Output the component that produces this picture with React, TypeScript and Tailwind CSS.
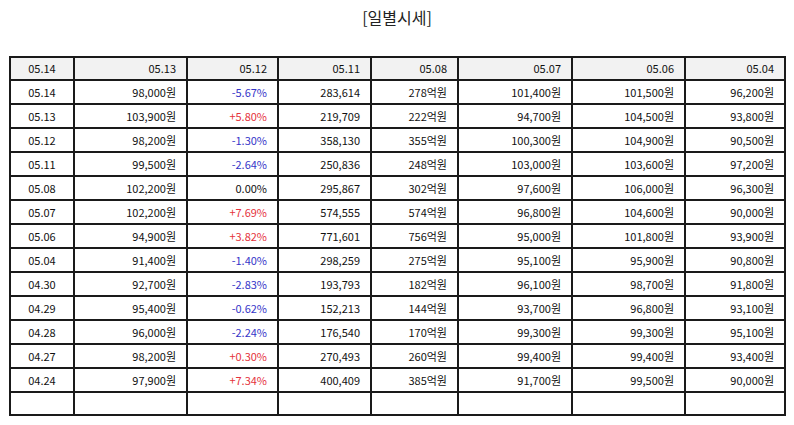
const headers = ['05.14', '05.13', '05.12', '05.11', '05.08', '05.07', '05.06', '05.04'];

const rows: string[][] = [
  ['05.14', '98,000원', '-5.67%', '283,614', '278억원', '101,400원', '101,500원', '96,200원'],
  ['05.13', '103,900원', '+5.80%', '219,709', '222억원', '94,700원', '104,500원', '93,800원'],
  ['05.12', '98,200원', '-1.30%', '358,130', '355억원', '100,300원', '104,900원', '90,500원'],
  ['05.11', '99,500원', '-2.64%', '250,836', '248억원', '103,000원', '103,600원', '97,200원'],
  ['05.08', '102,200원', '0.00%', '295,867', '302억원', '97,600원', '106,000원', '96,300원'],
  ['05.07', '102,200원', '+7.69%', '574,555', '574억원', '96,800원', '104,600원', '90,000원'],
  ['05.06', '94,900원', '+3.82%', '771,601', '756억원', '95,000원', '101,800원', '93,900원'],
  ['05.04', '91,400원', '-1.40%', '298,259', '275억원', '95,100원', '95,900원', '90,800원'],
  ['04.30', '92,700원', '-2.83%', '193,793', '182억원', '96,100원', '98,700원', '91,800원'],
  ['04.29', '95,400원', '-0.62%', '152,213', '144억원', '93,700원', '96,800원', '93,100원'],
  ['04.28', '96,000원', '-2.24%', '176,540', '170억원', '99,300원', '99,300원', '95,100원'],
  ['04.27', '98,200원', '+0.30%', '270,493', '260억원', '99,400원', '99,400원', '93,400원'],
  ['04.24', '97,900원', '+7.34%', '400,409', '385억원', '91,700원', '99,500원', '90,000원'],
];

// column widths incl. right border
const widths = ['w-[64px]', 'w-[113px]', 'w-[91px]', 'w-[93px]', 'w-[87px]', 'w-[114px]', 'w-[113px]', 'w-[100px]'];

function rateColor(v: string) {
  if (v.startsWith('+')) return 'text-[#e5323c]';
  if (v.startsWith('-')) return 'text-[#3535c8]';
  return 'text-[#111]';
}

export default function App() {
  return (
    <div
      className="w-[794px] h-[425px] bg-white text-[#111] overflow-hidden"
      style={{ fontFamily: '"Noto Sans CJK KR", "Noto Sans", sans-serif' }}
    >
      <h1 className="text-center text-[16px] leading-none pt-[9px] text-[#222]">[일별시세]</h1>

      <table className="ml-[9px] mt-[31px] border-separate border-spacing-0 table-fixed text-[11px] leading-none border-t-2 border-l-2 border-[#1a1a1a]">
        <colgroup>
          {widths.map((w, i) => (
            <col key={i} className={w} />
          ))}
        </colgroup>
        <thead>
          <tr className="bg-[#f2f2f2]">
            {headers.map((h, i) => (
              <th
                key={h}
                className={`h-[23px] border-r-2 border-b-2 border-[#1a1a1a] font-normal px-[10px] ${i === 0 ? 'text-center' : 'text-right'}`}
              >
                {h}
              </th>
            ))}
          </tr>
        </thead>
        <tbody>
          {rows.map((r) => (
            <tr key={r[0]}>
              {r.map((c, i) => (
                <td
                  key={i}
                  className={`h-[24px] border-r-2 border-b-2 border-[#1a1a1a] px-[10px] ${i === 0 ? 'text-center' : 'text-right'} ${i === 2 ? rateColor(c) : ''}`}
                >
                  {c}
                </td>
              ))}
            </tr>
          ))}
          <tr>
            {headers.map((h) => (
              <td key={h} className="h-[23px] border-r-2 border-b-2 border-[#1a1a1a]" />
            ))}
          </tr>
        </tbody>
      </table>
    </div>
  );
}
